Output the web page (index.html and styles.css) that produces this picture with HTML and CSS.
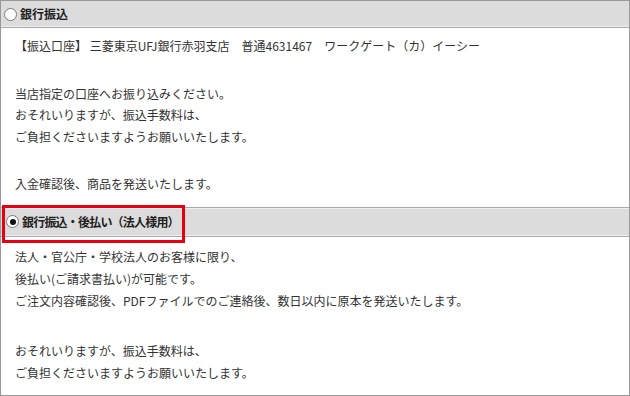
FILE: index.html
```html
<!DOCTYPE html>
<html lang="ja">
<head>
    <meta charset="UTF-8">
    <title>お支払い方法</title>
    <link rel="stylesheet" href="styles.css">
</head>
<body>
    <div class="pay-box">
        <!-- 銀行振込 -->
        <div class="pay-head pay-head--first">
            <span class="radio"></span>
            <span class="pay-title">銀行振込</span>
        </div>
        <div class="pay-body">
            <p>【振込口座】 三菱東京UFJ銀行赤羽支店　普通4631467　ワークゲート（カ）イーシー</p>
            <p>当店指定の口座へお振り込みください。<br>おそれいりますが、振込手数料は、<br>ご負担くださいますようお願いいたします。</p>
            <p>入金確認後、商品を発送いたします。</p>
        </div>

        <!-- 銀行振込・後払い -->
        <div class="pay-head pay-head--marked">
            <span class="radio radio--on"></span>
            <span class="pay-title">銀行振込・後払い（法人様用）</span>
            <span class="highlight"></span>
        </div>
        <div class="pay-body pay-body--second">
            <p>法人・官公庁・学校法人のお客様に限り、<br>後払い(ご請求書払い)が可能です。<br>ご注文内容確認後、PDFファイルでのご連絡後、数日以内に原本を発送いたします。</p>
            <p>おそれいりますが、振込手数料は、<br>ご負担くださいますようお願いいたします。</p>
        </div>
    </div>
</body>
</html>
```

FILE: styles.css
```css
html, body {
    margin: 0;
    background: #fff;
}

body {
    font-family: "Noto Sans CJK JP", "Noto Sans", sans-serif;
    font-size: 12px;
    color: #333;
}

.pay-box {
    box-sizing: border-box;
    width: 630px;
    height: 396px;
    border: 1px solid #999;
    overflow: hidden;
}

.pay-head {
    position: relative;
    display: flex;
    align-items: center;
    gap: 3px;
    height: 28px;
    padding-left: 3px;
    background: #dcdcdc;
    border-top: 1px solid #aaa;
    border-bottom: 1px solid #aaa;
    box-shadow: inset 0 1px #efefef, inset 0 -1px #efefef;
}

.pay-head--first {
    height: 26px;
    border-top: none;
    box-shadow: inset 0 -1px #efefef;
}

.pay-head--marked {
    padding-left: 5px;
}

.pay-head--marked .pay-title {
    letter-spacing: -0.8px;
}

.pay-title {
    font-weight: bold;
    color: #222;
    line-height: 1;
}

.radio {
    box-sizing: border-box;
    width: 13px;
    height: 13px;
    border: 1px solid #7a7a7a;
    border-radius: 50%;
    background: #fff;
    display: flex;
    align-items: center;
    justify-content: center;
}

.radio--on::after {
    content: "";
    width: 6px;
    height: 6px;
    border-radius: 50%;
    background: #111;
}

.highlight {
    position: absolute;
    left: 1px;
    top: -3px;
    width: 183px;
    height: 38px;
    box-sizing: border-box;
    border: 3px solid #e60012;
}

.pay-body {
    padding: 7px 14px 12px;
    line-height: 21.5px;
}

.pay-body p {
    margin: 0 0 26px;
}

.pay-body p:last-child {
    margin-bottom: 0;
}

.pay-body--second {
    padding-top: 9px;
    line-height: 22px;
}

.pay-body--second p {
    margin-bottom: 28px;
}
```
